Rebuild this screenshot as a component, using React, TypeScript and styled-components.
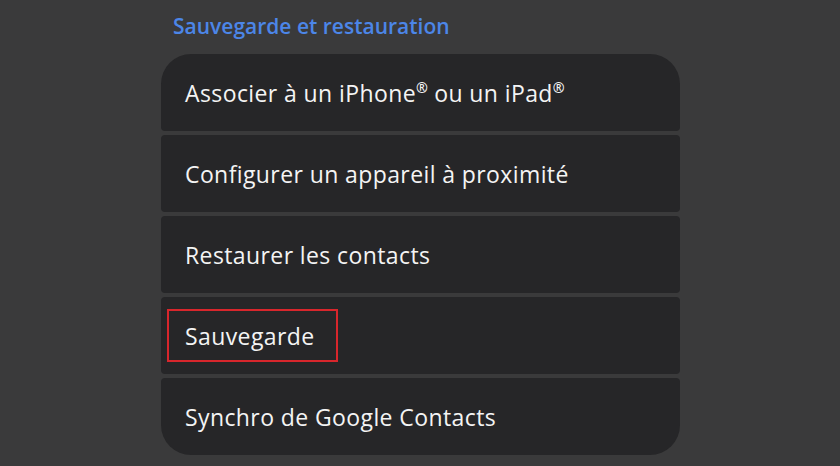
import React from "react";
import styled, { createGlobalStyle } from "styled-components";

const GlobalStyle = createGlobalStyle`
  html, body {
    margin: 0;
    padding: 0;
    background: #3a3a3b;
  }
  body {
    font-family: "Open Sans", Roboto, sans-serif;
  }
`;

const Page = styled.div`
  width: 840px;
  height: 466px;
  overflow: hidden;
  display: flex;
  justify-content: center;
  padding-left: 1px;
  box-sizing: border-box;
`;

const Column = styled.div`
  width: 519px;
  display: flex;
  flex-direction: column;
`;

const SectionTitle = styled.h2`
  margin: 0;
  height: 54px;
  padding: 12px 0 0 12px;
  box-sizing: border-box;
  font-size: 21px;
  font-weight: 600;
  line-height: 28px;
  color: #4c86e8;
`;

const List = styled.div`
  display: flex;
  flex-direction: column;
  gap: 4px;
`;

const Row = styled.div<{ $first?: boolean; $last?: boolean }>`
  height: 77px;
  display: flex;
  align-items: center;
  padding-left: 24px;
  background: #262628;
  border-radius: ${({ $first, $last }) =>
    $first ? "30px 30px 4px 4px" : $last ? "4px 4px 30px 30px" : "4px"};
`;

const Label = styled.span<{ $highlight?: boolean }>`
  position: relative;
  font-size: 23px;
  font-weight: 500;
  line-height: 30px;
  letter-spacing: 0.4px;
  color: #f4f4f4;

  ${({ $highlight }) =>
    $highlight &&
    `
    &::after {
      content: "";
      position: absolute;
      left: -18px;
      right: -23px;
      top: -12px;
      bottom: -11px;
      border: 2px solid #d8262c;
    }
  `}
`;

const Reg = styled.span`
  font-size: 0.62em;
  font-weight: 600;
  vertical-align: 0.62em;
  line-height: 0;
  letter-spacing: 0;
`;

// split "®" out so it renders as a small raised mark
const withMarks = (text: string) =>
  text.split("®").flatMap((part, i, arr) =>
    i < arr.length - 1 ? [part, <Reg key={i}>®</Reg>] : [part]
  );

const items = [
  "Associer à un iPhone® ou un iPad®",
  "Configurer un appareil à proximité",
  "Restaurer les contacts",
  "Sauvegarde",
  "Synchro de Google Contacts",
];

export default function App() {
  return (
    <Page>
      <GlobalStyle />
      <Column>
        <SectionTitle>Sauvegarde et restauration</SectionTitle>
        <List>
          {items.map((text, i) => (
            <Row key={text} $first={i === 0} $last={i === items.length - 1}>
              <Label $highlight={text === "Sauvegarde"}>{withMarks(text)}</Label>
            </Row>
          ))}
        </List>
      </Column>
    </Page>
  );
}
